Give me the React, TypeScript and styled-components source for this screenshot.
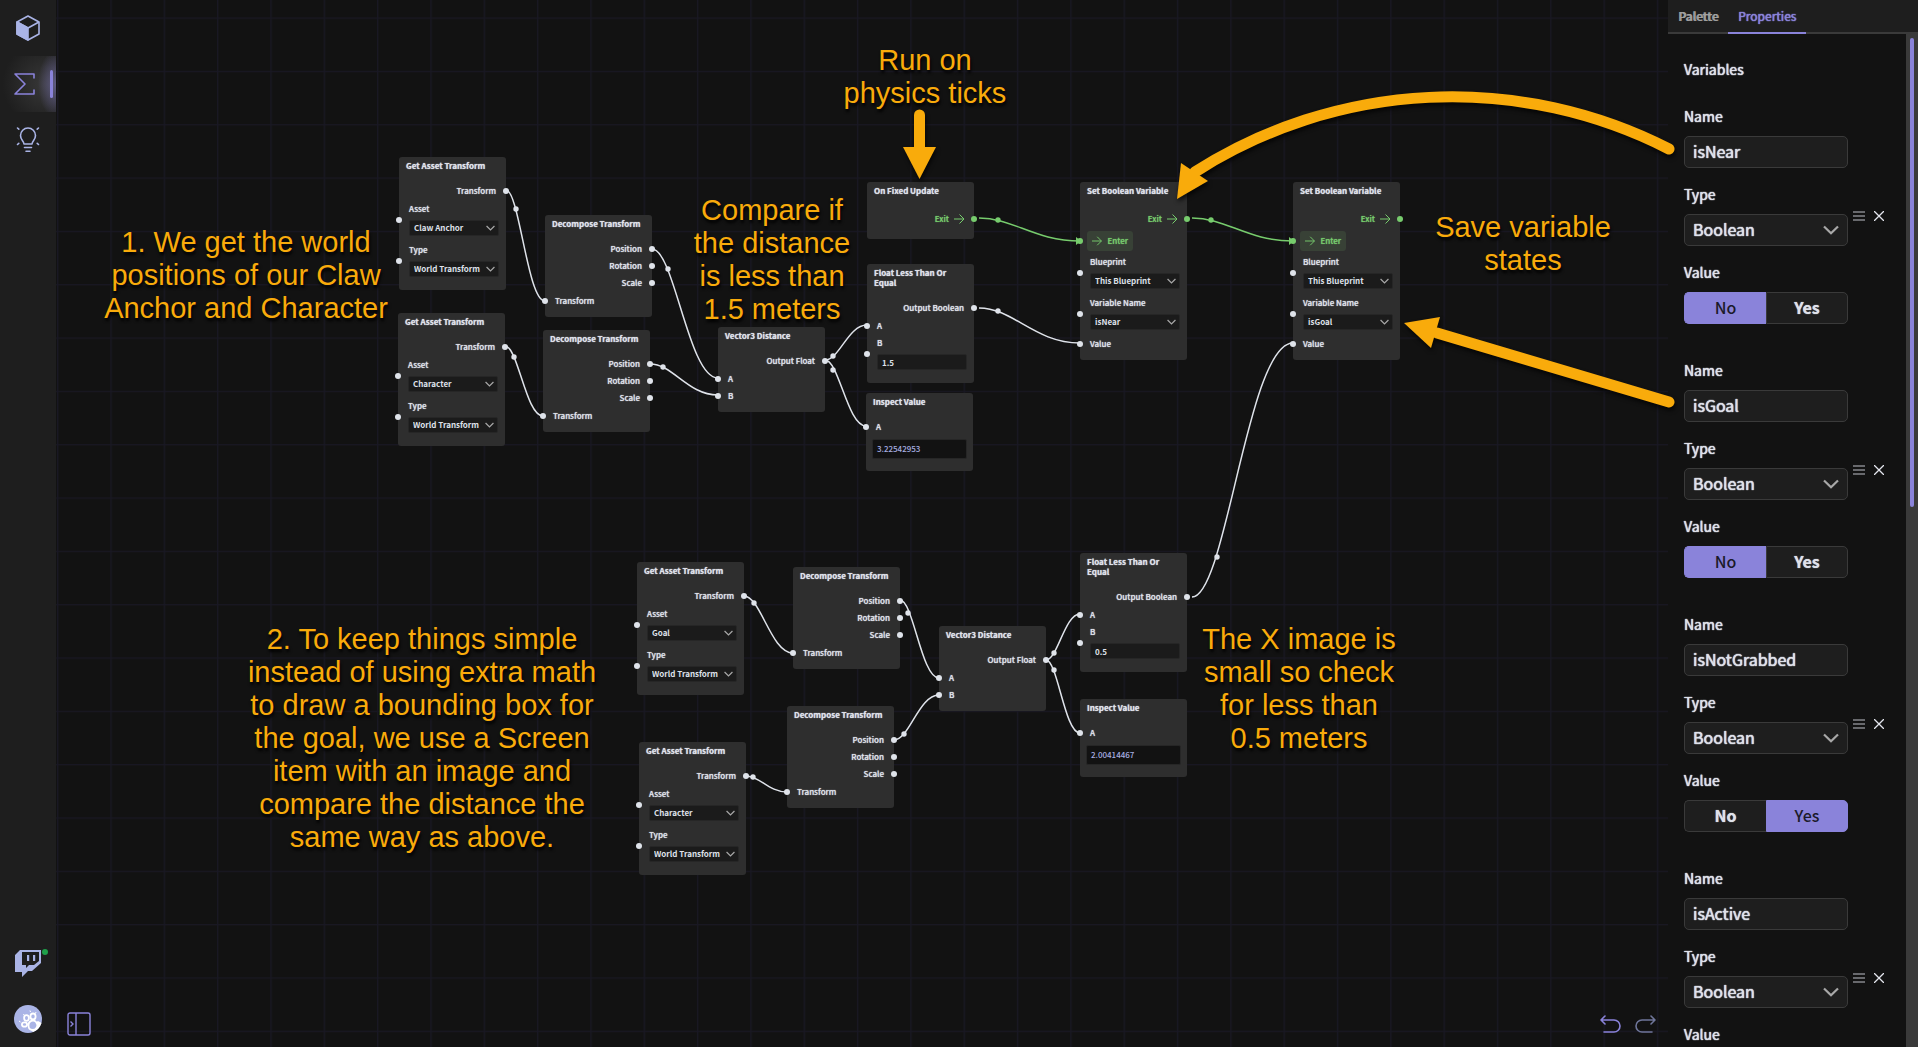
import React from "react";
import styled, { createGlobalStyle, css } from "styled-components";

const color = {
  canvas: "#121212",
  surface: "#1e1e1e",
  node: "#2e2e2e",
  line: "#3a3a3a",
  accent: "#8a83da",
  icon: "#aab4e6",
  text: "#dfe1ea",
  wire: "#dfe3ea",
  flow: "#77cc6d",
  note: "#f9ab0b",
};

const GlobalStyle = createGlobalStyle`
  *, *::before, *::after { box-sizing: border-box; }
  body { margin: 0; background: ${color.canvas}; }
  body, button, input, select {
    font-family: "Noto Sans CJK JP", "Noto Sans", sans-serif;
    color: ${color.text};
  }
  button { border: 0; padding: 0; background: none; cursor: pointer; }
  svg { display: block; }
`;

/* Regular weight with a slightly heavier stroke. */
const firm = css`
  font-weight: 400;
  text-shadow: 0 0 1px currentColor, 0 0 1px currentColor;
`;

const Shell = styled.div`
  position: relative;
  display: grid;
  grid-template-columns: 56px minmax(0, 1fr) 250px;
  height: 100vh;
  overflow: hidden;
`;

/* ---------- side bar ---------- */

const SideBar = styled.nav`
  display: flex;
  flex-direction: column;
  background: ${color.surface};
`;

const Spacer = styled.div`
  flex: 1;
`;

const SideItem = styled.button<{ $active?: boolean }>`
  position: relative;
  display: flex;
  align-items: center;
  justify-content: center;
  height: 56px;
  ${(p) =>
    p.$active &&
    css`
      padding-right: 6px;
      background:
        radial-gradient(ellipse 18px 34px at 100% 50%, #605c85 0%, transparent 100%),
        radial-gradient(circle at 80% 50%, #383838 0%, ${color.surface} 80%);
      &::after {
        content: "";
        position: absolute;
        right: 3px;
        top: 14px;
        width: 3px;
        height: 28px;
        border-radius: 2px;
        background: ${color.accent};
      }
    `}
`;

const Online = styled.span`
  position: absolute;
  top: 14px;
  right: 8px;
  width: 6px;
  height: 6px;
  border-radius: 50%;
  background: #1fa04a;
`;

/* ---------- canvas ---------- */

const Canvas = styled.main`
  position: relative;
  overflow: hidden;
`;

const Layer = styled.svg`
  position: absolute;
  inset: 0;
  width: 100%;
  height: 100%;
  overflow: visible;
  pointer-events: none;
`;

const NodeBox = styled.section<{ $x: number; $y: number }>`
  position: absolute;
  left: ${(p) => p.$x - 56}px;
  top: ${(p) => p.$y}px;
  width: 107px;
  padding-bottom: 8px;
  border-radius: 3px;
  background: ${color.node};
`;

const NodeTitle = styled.h3`
  margin: 0;
  padding: 4px 7px 11px;
  font-size: 8px;
  font-weight: 700;
  line-height: 10px;
  text-shadow: 0 0 1px currentColor;
`;

const Outputs = styled.div`
  margin-bottom: 1px;
`;

const Port = styled.span<{ $side: "left" | "right"; $flow?: boolean }>`
  position: absolute;
  top: 50%;
  ${(p) => p.$side}: -3px;
  width: 6px;
  height: 6px;
  margin-top: -3px;
  border-radius: 50%;
  background: ${(p) => (p.$flow ? color.flow : color.wire)};
`;

const nodeText = css`
  font-size: 8px;
  font-weight: 500;
  text-shadow: 0 0 1px currentColor;
`;

const Row = styled.div<{ $out?: boolean; $flow?: boolean }>`
  position: relative;
  display: flex;
  align-items: center;
  justify-content: ${(p) => (p.$out ? "flex-end" : "flex-start")};
  gap: 5px;
  height: ${(p) => (p.$flow ? 23 : 17)}px;
  padding: 0 ${(p) => (p.$flow ? 9 : 10)}px;
  line-height: 10px;
  color: ${(p) => (p.$flow ? color.flow : "inherit")};
  ${nodeText}
`;

const EnterRow = styled.div`
  position: relative;
  height: 20px;
  margin-bottom: 2px;
  padding-left: 7px;
`;

const EnterButton = styled.button`
  display: flex;
  align-items: center;
  gap: 5px;
  width: 46px;
  height: 20px;
  padding: 0 5px;
  border-radius: 3px;
  background: #384136;
  color: ${color.flow};
  line-height: 18px;
  ${nodeText}
`;

const Field = styled.div`
  padding: 0 7px 5px 10px;
`;

const FieldLabel = styled.label`
  display: block;
  height: 20px;
  line-height: 18px;
  ${nodeText}
`;

const FieldControl = styled.div`
  position: relative;
`;

const FieldPort = styled(Port)`
  top: 0;
  left: -13px;
`;

const nodeControl = css`
  display: block;
  width: 100%;
  height: 16px;
  padding: 0 4px;
  border: 1px solid #262626;
  border-radius: 2px;
  background: #1b1b1b;
  font-size: 8px;
  font-weight: 600;
  line-height: 14px;
  outline: none;
  appearance: none;
`;

const NodeSelect = styled.select`
  ${nodeControl}
`;

const NodeInput = styled.input`
  ${nodeControl}
`;

const Chevron = styled.svg<{ $size: number; $right: number }>`
  position: absolute;
  top: 0;
  bottom: 0;
  right: ${(p) => p.$right}px;
  width: ${(p) => p.$size}px;
  height: 100%;
  pointer-events: none;
`;

const Readout = styled.output`
  display: block;
  height: 20px;
  margin: 4px 6px;
  padding: 0 4px;
  border: 1px solid #262626;
  border-radius: 2px;
  background: ${color.canvas};
  color: #a7aee0;
  font-size: 8px;
  font-weight: 500;
  line-height: 18px;
`;

const Note = styled.p<{ $x: number; $y: number; $w: number }>`
  position: absolute;
  left: ${(p) => p.$x - 56}px;
  top: ${(p) => p.$y}px;
  width: ${(p) => p.$w}px;
  margin: 0;
  color: ${color.note};
  font-family: "Liberation Sans", Arial, sans-serif;
  font-size: 29px;
  line-height: 33px;
  text-align: center;
  white-space: pre-line;
  text-shadow: 1px 3px 3px #000;
`;

const PanelCorner = styled.div`
  position: absolute;
  bottom: 11px;
  left: 11px;
  display: flex;
`;

const HistoryCorner = styled.div`
  position: absolute;
  bottom: 13px;
  right: 12px;
  display: flex;
  gap: 12px;
`;

const Arrows = styled(Layer)`
  filter: drop-shadow(1px 3px 2px rgba(0, 0, 0, 0.7));
`;

/* ---------- properties panel ---------- */

const Panel = styled.aside`
  display: flex;
  flex-direction: column;
  min-height: 0;
  background: ${color.canvas};
`;

const Tabs = styled.div`
  display: flex;
  flex: none;
  height: 34px;
  background: ${color.surface};
  box-shadow: inset 0 -2px ${color.line};
`;

const Tab = styled.button<{ $active?: boolean }>`
  padding: 0 10px;
  border-bottom: 2px solid ${(p) => (p.$active ? color.accent : "transparent")};
  color: ${(p) => (p.$active ? color.accent : "#a0a0a0")};
  font-size: 12px;
  line-height: 30px;
  ${firm}
  ${(p) =>
    !p.$active &&
    css`
      font-weight: 500;
      text-shadow: 1px 0 currentColor;
    `}
`;

const PanelBody = styled.div`
  display: flex;
  flex: 1;
  min-height: 0;
`;

const Scroll = styled.div`
  flex: 1;
  overflow-y: auto;
  scrollbar-width: none;
  padding: 26px 0 0 16px;
`;

const Track = styled.div`
  width: 12px;
  padding: 4px 4px 0;
  background: ${color.line};
`;

const Thumb = styled.div`
  height: calc(47% - 5px);
  border-radius: 2px;
  background: ${color.accent};
`;

const propLabel = css`
  font-size: 14px;
  line-height: 18px;
  ${firm}
`;

const Heading = styled.h2`
  margin: 0 0 29px;
  ${propLabel}
`;

const Variable = styled.fieldset`
  display: flex;
  align-items: center;
  gap: 5px;
  min-width: 0;
  margin: 0 0 37px;
  padding: 0;
  border: 0;
`;

const Props = styled.div`
  display: flex;
  flex-direction: column;
  gap: 17px;
  width: 164px;
`;

const Prop = styled.div`
  display: flex;
  flex-direction: column;
  gap: 11px;
`;

const PropLabel = styled.label`
  ${propLabel}
`;

const PropCaption = styled.span`
  ${propLabel}
`;

const propControl = css`
  display: block;
  width: 100%;
  height: 32px;
  padding: 0 8px 2px;
  border: 1px solid ${color.line};
  border-radius: 5px;
  background: ${color.surface};
  font-size: 16px;
  line-height: 28px;
  outline: none;
  appearance: none;
  ${firm}
`;

const PropInput = styled.input`
  ${propControl}
`;

const PropSelect = styled.select`
  ${propControl}
`;

const SelectWrap = styled.div`
  position: relative;
`;

const Toggle = styled.div`
  display: grid;
  grid-template-columns: 1fr 1fr;
  height: 32px;
`;

const Choice = styled.button<{ $on: boolean }>`
  padding-bottom: 2px;
  border: 1px solid ${(p) => (p.$on ? color.accent : color.line)};
  background: ${(p) => (p.$on ? color.accent : color.surface)};
  color: ${(p) => (p.$on ? "#1b1a2a" : color.text)};
  font-size: 16px;
  line-height: 28px;
  font-weight: ${(p) => (p.$on ? 500 : 700)};
  text-shadow: ${(p) => (p.$on ? "none" : "0 0 1px currentColor")};
  &:first-child {
    border-radius: 5px 0 0 5px;
    border-right-width: 0;
  }
  &:last-child {
    border-radius: 0 5px 5px 0;
  }
`;

const Tools = styled.div`
  display: flex;
  gap: 9px;
`;

/* ---------- drawings ---------- */

const CubeIcon = () => (
  <svg width="26" height="28" viewBox="0 0 26 28" fill="none" stroke={color.icon} strokeWidth="1.6" strokeLinejoin="round">
    <path d="M13 2 24 8v12L13 26 2 20V8z" />
    <path d="M2 8l11 6 11-6" />
    <path d="M2 8l11 6v12L2 20z" fill={color.icon} />
  </svg>
);

const SigmaIcon = () => (
  <svg width="22" height="22" viewBox="0 0 22 22" fill="none" stroke={color.accent} strokeWidth="1.6" strokeLinejoin="round" strokeLinecap="round">
    <path d="M20 5V1H1l10 10L1 21h19v-4" />
  </svg>
);

const BulbIcon = () => (
  <svg width="26" height="28" viewBox="0 0 26 28" fill="none" stroke={color.icon} strokeWidth="1.6" strokeLinecap="round">
    <path d="M9 18c0-3-3.500-4-3.500-8.500a7.500 7.500 0 0 1 15 0C20.500 14 17 15 17 18z" strokeLinejoin="round" />
    <path d="M9.500 21.500h7M11 25.200h4M2.500 2l1.300 1.200M23.500 2l-1.300 1.200M2.500 18.500l1.300-1.200M23.500 18.500l-1.300-1.200" />
  </svg>
);

const ChatIcon = () => (
  <svg width="26" height="28" viewBox="0 0 26 28" fill={color.icon}>
    <path fillRule="evenodd" d="M5 1h21v13l-9 8h-4l-6 6v-5H0V6zM7 3v13h4v3l3-3h5l5-4V3z" />
    <path d="M12 6h2.200v6H12zM18 6h2.200v6H18z" />
  </svg>
);

const PawAvatar = () => (
  <svg width="28" height="28" viewBox="0 0 28 28">
    <circle cx="14" cy="14" r="14" fill={color.icon} />
    <path d="M14 22l10-6 3.500 2a14 14 0 0 1-8.500 9z" fill="#fff" />
    <g fill={color.icon} stroke="#fff" strokeWidth="1.800">
      <path d="M14.500 20c0-4 5-6 7.500-3s1 8-3 8-4.500-2-4.500-5z" />
      <ellipse cx="10.500" cy="19.500" rx="2.600" ry="2.200" />
      <ellipse cx="12.500" cy="13" rx="2.400" ry="2.800" />
      <ellipse cx="19" cy="11.500" rx="2.600" ry="3" />
    </g>
    <path d="M5 16l1.500 1M9.500 9l.8 1.500M16 5.500l.5 1.500M22 7l-.5 1.500" stroke="#fff" strokeWidth="1" />
  </svg>
);

const ArrowIcon = () => (
  <svg width="11" height="10" viewBox="0 0 11 10" fill="none" stroke={color.flow} strokeWidth="1">
    <path d="M0 5h10M5.500 .5 10 5 5.500 9.500" />
  </svg>
);

const ChevronIcon = ({ size, right }: { size: number; right: number }) => (
  <Chevron $size={size} $right={right} viewBox="0 0 16 10" fill="none" stroke="#a8a8a8" strokeWidth="2.200" aria-hidden="true">
    <path d="M1 1.500 8 8.300l7-6.800" />
  </Chevron>
);

const PanelIcon = () => (
  <svg width="24" height="24" viewBox="0 0 24 24" fill="none" stroke={color.accent} strokeWidth="1.400">
    <rect x="1" y="1" width="22" height="22" rx="2" />
    <path d="M9 1v22M3.500 9.500l2.500 2.500-2.500 2.500" />
  </svg>
);

const UndoIcon = ({ flip }: { flip?: boolean }) => (
  <svg width="22" height="20" viewBox="0 0 22 20" fill="none" stroke={flip ? "#6f769a" : color.accent} strokeWidth="1.600" strokeLinecap="round" strokeLinejoin="round">
    {flip ? (
      <path d="M18 18H8a6 6 0 0 1 0-12h13M17 2l4 4-4 4" />
    ) : (
      <path d="M4 18h10a6 6 0 0 0 0-12H1M5 2 1 6l4 4" />
    )}
  </svg>
);

/* ---------- graph ---------- */

type OutPart = { kind: "out"; label: string; flow?: boolean };
type BodyPart =
  | { kind: "enter" }
  | { kind: "in"; label: string }
  | { kind: "select"; label: string; value: string }
  | { kind: "input"; label: string; value: string }
  | { kind: "readout"; value: string };

type NodeData = { title: string; x: number; y: number; outputs: OutPart[]; body: BodyPart[] };

const out = (label: string, flow?: boolean): OutPart => ({ kind: "out", label, flow });
const inn = (label: string): BodyPart => ({ kind: "in", label });
const pick = (label: string, value: string): BodyPart => ({ kind: "select", label, value });

const getTransform = (x: number, y: number, asset: string): NodeData => ({
  title: "Get Asset Transform", x, y,
  outputs: [out("Transform")],
  body: [pick("Asset", asset), pick("Type", "World Transform")],
});
const decompose = (x: number, y: number): NodeData => ({
  title: "Decompose Transform", x, y,
  outputs: [out("Position"), out("Rotation"), out("Scale")],
  body: [inn("Transform")],
});
const distance = (x: number, y: number): NodeData => ({
  title: "Vector3 Distance", x, y,
  outputs: [out("Output Float")],
  body: [inn("A"), inn("B")],
});
const lessOrEqual = (x: number, y: number, value: string): NodeData => ({
  title: "Float Less Than Or Equal", x, y,
  outputs: [out("Output Boolean")],
  body: [inn("A"), { kind: "input", label: "B", value }],
});
const inspect = (x: number, y: number, value: string): NodeData => ({
  title: "Inspect Value", x, y,
  outputs: [],
  body: [inn("A"), { kind: "readout", value }],
});
const setBoolean = (x: number, y: number, name: string): NodeData => ({
  title: "Set Boolean Variable", x, y,
  outputs: [out("Exit", true)],
  body: [{ kind: "enter" }, pick("Blueprint", "This Blueprint"), pick("Variable Name", name), inn("Value")],
});

const nodes: NodeData[] = [
  getTransform(399, 157, "Claw Anchor"),
  decompose(545, 215),
  getTransform(398, 313, "Character"),
  decompose(543, 330),
  distance(718, 327),
  { title: "On Fixed Update", x: 867, y: 182, outputs: [out("Exit", true)], body: [] },
  lessOrEqual(867, 264, "1.5"),
  inspect(866, 393, "3.22542953"),
  setBoolean(1080, 182, "isNear"),
  setBoolean(1293, 182, "isGoal"),
  getTransform(637, 562, "Goal"),
  decompose(793, 567),
  getTransform(639, 742, "Character"),
  decompose(787, 706),
  distance(939, 626),
  lessOrEqual(1080, 553, "0.5"),
  inspect(1080, 699, "2.00414467"),
];

type Wire = { from: [number, number]; to: [number, number]; dot: [number, number]; flow?: boolean };

const wires: Wire[] = [
  { from: [506, 190], to: [545, 301], dot: [516, 209] },
  { from: [505, 346], to: [543, 416], dot: [514, 357] },
  { from: [652, 249], to: [718, 378], dot: [668, 269] },
  { from: [650, 364], to: [718, 395], dot: [663, 367] },
  { from: [825, 360], to: [867, 325], dot: [833, 356] },
  { from: [825, 360], to: [866, 426], dot: [833, 370] },
  { from: [979, 218], to: [1080, 241], dot: [998, 220], flow: true },
  { from: [979, 308], to: [1080, 343], dot: [998, 311] },
  { from: [1192, 218], to: [1293, 241], dot: [1211, 220], flow: true },
  { from: [744, 596], to: [793, 653], dot: [754, 603] },
  { from: [900, 600], to: [939, 678], dot: [908, 613] },
  { from: [894, 740], to: [939, 695], dot: [904, 734] },
  { from: [746, 776], to: [787, 792], dot: [753, 777] },
  { from: [1046, 660], to: [1080, 614], dot: [1054, 653] },
  { from: [1046, 660], to: [1080, 733], dot: [1054, 670] },
  { from: [1192, 597], to: [1293, 343], dot: [1217, 557] },
];

const wirePath = ({ from: [x1, y1], to: [x2, y2] }: Wire) => {
  const dx = x2 - x1;
  return `M${x1} ${y1}C${x1 + dx * 0.34} ${y1} ${x2 - dx * 0.45} ${y2} ${x2} ${y2}`;
};

const GraphNode = ({ node }: { node: NodeData }) => (
  <NodeBox $x={node.x} $y={node.y}>
    <NodeTitle>{node.title}</NodeTitle>
    {node.outputs.length > 0 && (
      <Outputs>
        {node.outputs.map((p) => (
          <Row key={p.label} $out $flow={p.flow}>
            {p.label}
            {p.flow && <ArrowIcon />}
            <Port $side="right" $flow={p.flow} />
          </Row>
        ))}
      </Outputs>
    )}
    {node.body.map((p, i) => {
      const id = `n${node.x}-${node.y}-${i}`;
      switch (p.kind) {
        case "enter":
          return (
            <EnterRow key={id}>
              <EnterButton><ArrowIcon />Enter</EnterButton>
              <Port $side="left" $flow />
            </EnterRow>
          );
        case "in":
          return (
            <Row key={id}>
              {p.label}
              <Port $side="left" />
            </Row>
          );
        case "select":
        case "input":
          return (
            <Field key={id}>
              <FieldLabel htmlFor={id}>{p.label}</FieldLabel>
              <FieldControl>
                {p.kind === "select" ? (
                  <>
                    <NodeSelect id={id} defaultValue={p.value}><option>{p.value}</option></NodeSelect>
                    <ChevronIcon size={9} right={4} />
                  </>
                ) : (
                  <NodeInput id={id} defaultValue={p.value} />
                )}
                <FieldPort $side="left" />
              </FieldControl>
            </Field>
          );
        case "readout":
          return <Readout key={id}>{p.value}</Readout>;
      }
    })}
  </NodeBox>
);

const notes = [
  { x: 96, y: 226, w: 300, text: "1. We get the world\npositions of our Claw\nAnchor and Character" },
  { x: 825, y: 44, w: 200, text: "Run on\nphysics ticks" },
  { x: 672, y: 194, w: 200, text: "Compare if\nthe distance\nis less than\n1.5 meters" },
  { x: 1423, y: 211, w: 200, text: "Save variable\nstates" },
  { x: 222, y: 623, w: 400, text: "2. To keep things simple\ninstead of using extra math\nto draw a bounding box for\nthe goal, we use a Screen\nitem with an image and\ncompare the distance the\nsame way as above." },
  { x: 1179, y: 623, w: 240, text: "The X image is\nsmall so check\nfor less than\n0.5 meters" },
];

const variables = [
  { name: "isNear", value: false },
  { name: "isGoal", value: false },
  { name: "isNotGrabbed", value: true },
  { name: "isActive", value: false },
];

const VariableForm = ({ name, value }: { name: string; value: boolean }) => {
  const [on, setOn] = React.useState(value);
  return (
    <Variable>
      <Props>
        <Prop>
          <PropLabel htmlFor={`${name}-name`}>Name</PropLabel>
          <PropInput id={`${name}-name`} defaultValue={name} />
        </Prop>
        <Prop>
          <PropLabel htmlFor={`${name}-type`}>Type</PropLabel>
          <SelectWrap>
            <PropSelect id={`${name}-type`} defaultValue="Boolean"><option>Boolean</option></PropSelect>
            <ChevronIcon size={16} right={9} />
          </SelectWrap>
        </Prop>
        <Prop>
          <PropCaption id={`${name}-value`}>Value</PropCaption>
          <Toggle role="group" aria-labelledby={`${name}-value`}>
            <Choice $on={!on} aria-pressed={!on} onClick={() => setOn(false)}>No</Choice>
            <Choice $on={on} aria-pressed={on} onClick={() => setOn(true)}>Yes</Choice>
          </Toggle>
        </Prop>
      </Props>
      <Tools>
        <button aria-label={`Move ${name}`}>
          <svg width="12" height="10" viewBox="0 0 12 10" stroke="#85878c" strokeWidth="1.500"><path d="M0 1h12M0 5h12M0 9h12" /></svg>
        </button>
        <button aria-label={`Remove ${name}`}>
          <svg width="10" height="10" viewBox="0 0 10 10" stroke="#e4e6ee" strokeWidth="1.300"><path d="M0 0l10 10M10 0 0 10" /></svg>
        </button>
      </Tools>
    </Variable>
  );
};

export default function App() {
  return (
    <Shell>
      <GlobalStyle />
      <SideBar>
        <SideItem aria-label="Assets"><CubeIcon /></SideItem>
        <SideItem aria-label="Blueprints" $active><SigmaIcon /></SideItem>
        <SideItem aria-label="Ideas"><BulbIcon /></SideItem>
        <Spacer />
        <SideItem aria-label="Twitch"><ChatIcon /><Online /></SideItem>
        <SideItem aria-label="Account"><PawAvatar /></SideItem>
      </SideBar>

      <Canvas>
        <Layer aria-hidden="true">
          <defs>
            <pattern id="grid" width="160" height="160" patternUnits="userSpaceOnUse" patternTransform="translate(1 17.500) scale(0.3333)">
              <path d="M0 2H160M2 0V160" stroke="#191823" strokeWidth="4" />
            </pattern>
          </defs>
          <rect width="100%" height="100%" fill="url(#grid)" />
        </Layer>
        {nodes.map((n) => <GraphNode key={`${n.x}-${n.y}`} node={n} />)}
        <Layer aria-hidden="true">
          <g transform="translate(-56 0)" fill="none" strokeWidth="1.500">
            {wires.map((w) => {
              const c = w.flow ? color.flow : color.wire;
              return (
                <g key={`${w.from}-${w.to}`} stroke={c}>
                  <path d={wirePath(w)} />
                  <circle cx={w.dot[0]} cy={w.dot[1]} r="2.700" fill={c} stroke="none" />
                  {w.flow && <path d={`M${w.to[0] - 4} ${w.to[1] - 4}v8l5-4z`} fill={c} stroke="none" />}
                </g>
              );
            })}
          </g>
        </Layer>
        {notes.map((n) => <Note key={n.text} $x={n.x} $y={n.y} $w={n.w}>{n.text}</Note>)}
        <PanelCorner><button aria-label="Toggle side panel"><PanelIcon /></button></PanelCorner>
        <HistoryCorner>
          <button aria-label="Undo"><UndoIcon /></button>
          <button aria-label="Redo"><UndoIcon flip /></button>
        </HistoryCorner>
      </Canvas>

      <Panel>
        <Tabs role="tablist">
          <Tab role="tab" aria-selected={false}>Palette</Tab>
          <Tab role="tab" aria-selected $active>Properties</Tab>
        </Tabs>
        <PanelBody>
          <Scroll>
            <Heading>Variables</Heading>
            {variables.map((v) => <VariableForm key={v.name} {...v} />)}
          </Scroll>
          <Track><Thumb /></Track>
        </PanelBody>
      </Panel>

      <Arrows aria-hidden="true">
        <g fill="none" stroke={color.note} strokeWidth="11" strokeLinecap="round">
          <path d="M919.500 115V148" />
          <path d="M1669 149A477 477 0 0 0 1195 172" />
          <path d="M1669 402 1437 333" />
        </g>
        <g fill={color.note}>
          <path d="M903 147h33l-16.500 32z" />
          <path d="M1181 163l27 18-31 18z" />
          <path d="M1404 323l36-6-9 31z" />
        </g>
      </Arrows>
    </Shell>
  );
}
